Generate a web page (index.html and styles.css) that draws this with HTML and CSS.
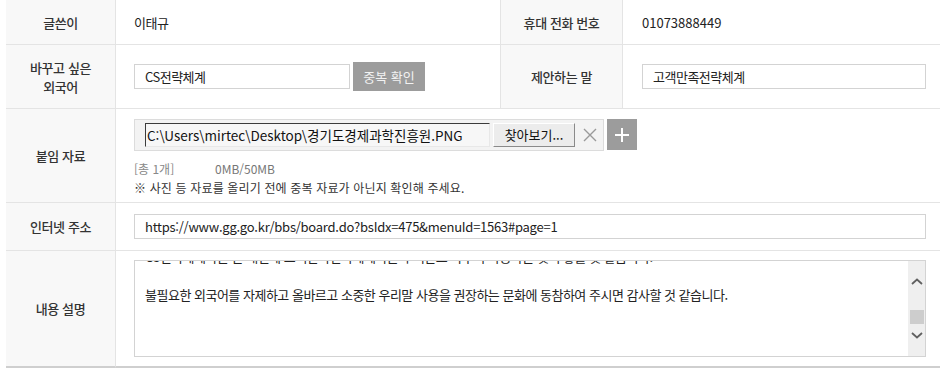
FILE: index.html
```html
<!DOCTYPE html>
<html lang="ko">
<head>
    <meta charset="UTF-8">
    <title>외국어 순화 제안</title>
    <link rel="stylesheet" href="styles.css">
</head>
<body>
    <div class="form-grid">
        <!-- row 1 -->
        <div class="label row-a">글쓴이</div>
        <div class="value row-a ko">이태규</div>
        <div class="label label-mid row-a">휴대 전화 번호</div>
        <div class="value value-end row-a">01073888449</div>

        <!-- row 2 -->
        <div class="label row-b">바꾸고 싶은<br>외국어</div>
        <div class="value row-b">
            <div class="text-box box-word ko">CS전략체계</div>
            <button class="btn-check">중복 확인</button>
        </div>
        <div class="label label-mid row-b">제안하는 말</div>
        <div class="value value-end row-b">
            <div class="text-box box-suggest ko">고객만족전략체계</div>
        </div>

        <!-- row 3 -->
        <div class="label row-c">붙임 자료</div>
        <div class="value value-wide row-c file-cell">
            <div class="file-line">
                <div class="file-box">
                    <div class="file-path">C:\Users\mirtec\Desktop\경기도경제과학진흥원.PNG</div>
                    <div class="file-browse">찾아보기...</div>
                    <svg class="file-remove" width="14" height="14" viewBox="0 0 14 14">
                        <path d="M1 1 L13 13 M13 1 L1 13" stroke="#9a9a9a" stroke-width="1.4" fill="none"/>
                    </svg>
                </div>
                <button class="btn-add">
                    <svg width="16" height="16" viewBox="0 0 16 16">
                        <path d="M8 1 V15 M1 8 H15" stroke="#ffffff" stroke-width="2" fill="none"/>
                    </svg>
                </button>
            </div>
            <div class="file-count"><span class="count-total">[총 1개]</span><span class="count-size">0MB/50MB</span></div>
            <div class="file-note">※ 사진 등 자료를 올리기 전에 중복 자료가 아닌지 확인해 주세요.</div>
        </div>

        <!-- row 4 -->
        <div class="label row-d">인터넷 주소</div>
        <div class="value value-wide row-d">
            <div class="text-box box-url">https://www.gg.go.kr/bbs/board.do?bsIdx=475&amp;menuId=1563#page=1</div>
        </div>

        <!-- row 5 -->
        <div class="label row-e">내용 설명</div>
        <div class="value value-wide row-e">
            <div class="memo">
                <div class="memo-text ko">
                    <p>CS전략체계라는 말 대신에 고객만족전략체계라는 우리말로 바꾸어 사용하는 것이 좋을 것 같습니다.</p>
                    <p>&nbsp;</p>
                    <p>불필요한 외국어를 자제하고 올바르고 소중한 우리말 사용을 권장하는 문화에 동참하여 주시면 감사할 것 같습니다.</p>
                </div>
                <div class="memo-scroll">
                    <svg class="arrow-up" width="12" height="7" viewBox="0 0 12 7">
                        <path d="M1 6 L6 1.5 L11 6" stroke="#606060" stroke-width="1.8" fill="none"/>
                    </svg>
                    <div class="scroll-thumb"></div>
                    <svg class="arrow-down" width="12" height="7" viewBox="0 0 12 7">
                        <path d="M1 1 L6 5.5 L11 1" stroke="#606060" stroke-width="1.8" fill="none"/>
                    </svg>
                </div>
            </div>
        </div>
    </div>
</body>
</html>
```

FILE: styles.css
```css
body {
    margin: 0;
    font-family: "Noto Sans CJK KR", "Noto Sans", sans-serif;
    font-size: 13px;
    color: #222;
    background-color: #ffffff;
    overflow: hidden;
}

.form-grid {
    display: grid;
    grid-template-columns: 110px 384px 123px 318px;
    grid-template-rows: 45px 64px 94px 48px 117px;
    margin-left: 6px;
}

.label,
.value {
    box-sizing: border-box;
    border-bottom: 1px solid #e4e4e4;
    display: flex;
    align-items: center;
}

.label {
    justify-content: center;
    text-align: center;
    background-color: #f8f8f8;
    border-right: 1px solid #e4e4e4;
    color: #333;
    font-weight: 500;
    line-height: 19px;
    letter-spacing: -0.4px;
}

.label-mid {
    border-left: 1px solid #e4e4e4;
}

.value {
    padding-left: 18px;
}

.value-end {
    padding-left: 19px;
}

.value-wide {
    grid-column: span 3;
}

.ko {
    letter-spacing: -0.5px;
}

.row-e {
    border-bottom: 2px solid #cfcfcf;
    align-items: flex-start;
    padding-top: 9px;
}

.label.row-e {
    align-items: center;
    padding-top: 0;
}

/* text fields */
.text-box {
    box-sizing: border-box;
    height: 25px;
    padding-left: 10px;
    border: 1px solid #d3d3d3;
    line-height: 23px;
    white-space: nowrap;
    overflow: hidden;
}

.box-word {
    width: 216px;
}

.box-suggest {
    width: 284px;
}

.box-url {
    width: 792px;
    letter-spacing: -0.25px;
}

.btn-check {
    width: 72px;
    height: 29px;
    margin-left: 3px;
    border: none;
    background-color: #9c9c9c;
    color: #f2f2f2;
    font-family: inherit;
    font-size: 13px;
    padding: 0;
}

/* attachment */
.file-cell {
    flex-direction: column;
    align-items: flex-start;
    justify-content: flex-start;
    padding-top: 10px;
}

.file-line {
    display: flex;
    align-items: flex-start;
}

.file-box {
    box-sizing: border-box;
    width: 470px;
    height: 32px;
    display: flex;
    align-items: center;
    padding-left: 10px;
    border: 1px solid #dcdcdc;
    background-color: #f3f3f3;
}

.file-path {
    box-sizing: border-box;
    width: 345px;
    height: 24px;
    padding-left: 1px;
    border-top: 1px solid #3c3c3c;
    border-left: 1px solid #3c3c3c;
    border-right: 1px solid #e8e8e8;
    border-bottom: 1px solid #e8e8e8;
    background-color: #f7f7f7;
    color: #111;
    font-size: 13.5px;
    line-height: 22px;
    white-space: nowrap;
    overflow: hidden;
}

.file-browse {
    box-sizing: border-box;
    width: 82px;
    height: 24px;
    margin-left: 3px;
    border-top: 1px solid #ffffff;
    border-left: 1px solid #ffffff;
    border-right: 1px solid #8a8a8a;
    border-bottom: 1px solid #8a8a8a;
    background-color: #ececec;
    text-align: center;
    line-height: 22px;
    color: #111;
}

.file-remove {
    margin-left: 8px;
}

.btn-add {
    width: 30px;
    height: 31px;
    margin-left: 3px;
    border: none;
    padding: 0;
    background-color: #9c9c9c;
    display: flex;
    align-items: center;
    justify-content: center;
}

.file-count {
    margin-top: 8px;
    font-size: 12px;
    line-height: 19px;
    color: #888;
}

.count-total {
    display: inline-block;
    width: 81px;
}

.count-size {
    color: #777;
}

.file-note {
    font-size: 12px;
    line-height: 19px;
    color: #333;
    letter-spacing: 0.15px;
}

/* description box */
.memo {
    box-sizing: border-box;
    width: 792px;
    height: 97px;
    border: 1px solid #d3d3d3;
    display: flex;
    overflow: hidden;
}

.memo-text {
    flex: 1;
    overflow: hidden;
    padding-left: 10px;
}

.memo-text p {
    margin: 0;
    line-height: 19px;
    white-space: nowrap;
}

.memo-text p:first-child {
    margin-top: -14px;
}

.memo-scroll {
    width: 17px;
    background-color: #efefef;
    display: flex;
    flex-direction: column;
    align-items: center;
}

.arrow-up {
    margin-top: 17px;
}

.scroll-thumb {
    width: 14px;
    height: 14px;
    margin-top: 25px;
    background-color: #cdcdcd;
}

.arrow-down {
    margin-top: 8px;
}
```
